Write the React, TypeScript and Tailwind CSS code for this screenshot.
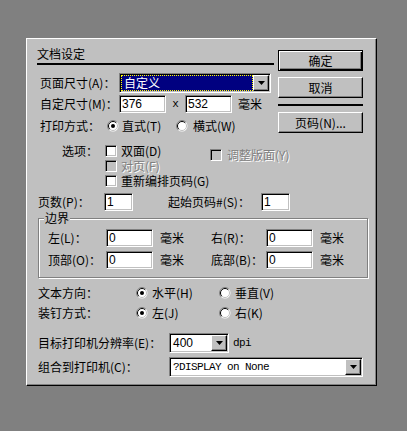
import type { ReactNode } from "react";

const sunken =
  "border border-t-[#808080] border-l-[#808080] border-r-white border-b-white shadow-[inset_1px_1px_0_#000,inset_-1px_-1px_0_#c0c0c0]";

function Field({ className, value }: { className: string; value: string }) {
  return (
    <div
      className={`${className} h-[18px] shrink-0 bg-white pl-[2px] flex items-center font-['Liberation_Sans',sans-serif] ${sunken}`}
    >
      {value}
    </div>
  );
}

function Arrow() {
  return (
    <svg width="7" height="4" viewBox="0 0 7 4">
      <polygon points="0,0 7,0 3.5,4" fill="#000" />
    </svg>
  );
}

function Combo({
  className,
  children,
  selected = false,
}: {
  className: string;
  children: ReactNode;
  selected?: boolean;
}) {
  return (
    <div className={`${className} h-[20px] shrink-0 flex bg-white p-[1px] ${sunken}`}>
      <div
        className={
          selected
            ? "flex-1 flex items-center pl-[2px] bg-[#000080] text-white border border-dotted border-[#ffff00]"
            : "flex-1 flex items-center pl-[2px]"
        }
      >
        {children}
      </div>
      <div className="w-[16px] h-full bg-[#c0c0c0] border border-t-white border-l-white border-r-black border-b-black shadow-[inset_-1px_-1px_0_#808080] flex items-center justify-center">
        <Arrow />
      </div>
    </div>
  );
}

function Checkbox({ disabled = false }: { disabled?: boolean }) {
  return (
    <div
      className={`w-[12px] h-[12px] shrink-0 ${disabled ? "bg-[#c0c0c0]" : "bg-white"} ${sunken}`}
    />
  );
}

function Radio({ checked = false }: { checked?: boolean }) {
  return (
    <svg width="12" height="12" viewBox="0 0 12 12" className="shrink-0">
      <circle cx="6" cy="6" r="5.5" fill="#fff" />
      <path d="M2.1 9.9 A5.5 5.5 0 0 1 9.9 2.1" fill="none" stroke="#808080" />
      <path d="M2.8 9.2 A4.5 4.5 0 0 1 9.2 2.8" fill="none" stroke="#000" />
      <path d="M9.2 2.8 A4.5 4.5 0 0 1 2.8 9.2" fill="none" stroke="#c0c0c0" />
      {checked && <circle cx="6" cy="6" r="2" fill="#000" />}
    </svg>
  );
}

function Btn({ children, def = false }: { children: ReactNode; def?: boolean }) {
  return (
    <button
      className={
        def
          ? "w-full h-[21px] bg-[#c0c0c0] border border-black shadow-[inset_1px_1px_0_#fff,inset_-1px_-1px_0_#000,inset_-2px_-2px_0_#808080] flex items-center justify-center"
          : "w-full h-[21px] bg-[#c0c0c0] border border-t-white border-l-white border-r-black border-b-black shadow-[inset_-1px_-1px_0_#808080] flex items-center justify-center"
      }
    >
      {children}
    </button>
  );
}

const disabledText = "text-[#808080] [text-shadow:1px_1px_0_#fff]";

export default function App() {
  return (
    <div className="min-h-[431px] w-full bg-[#808080] pt-[38px] pl-[26px] font-['Noto_Sans_CJK_SC',sans-serif] text-[12px] leading-[14px] text-black">
      <div className="w-[351px] h-[348px] bg-[#c0c0c0] border border-t-white border-l-white border-r-black border-b-black shadow-[inset_-1px_-1px_0_#808080] pl-[10px]">
        {/* title + size + buttons */}
        <div className="flex">
          <div className="w-[237px]">
            <div className="h-[26px] border-b-2 border-black flex items-end pb-[2px]">文档设定</div>
            <div className="mt-[8px] h-[20px] flex items-center">
              <span className="pl-[3px] w-[82px] whitespace-nowrap">页面尺寸(A)：</span>
              <Combo className="w-[152px]" selected>
                自定义
              </Combo>
            </div>
            <div className="mt-[2px] h-[18px] flex items-center">
              <span className="pl-[3px] w-[82px] whitespace-nowrap">自定尺寸(M)：</span>
              <Field className="w-[47px]" value="376" />
              <span className="w-[19px] text-center font-['Liberation_Mono',monospace] text-[11px]">x</span>
              <Field className="w-[47px]" value="532" />
              <span className="ml-[6px]">毫米</span>
            </div>
            <div className="mt-[4px] h-[18px] flex items-center">
              <span className="pl-[3px] w-[70px] whitespace-nowrap">打印方式：</span>
              <Radio checked />
              <span className="ml-[3px] w-[54px]">直式(T)</span>
              <Radio />
              <span className="ml-[5px]">横式(W)</span>
            </div>
          </div>
          <div className="ml-[4px] w-[85px]">
            <div className="mt-[11px]">
              <Btn def>确定</Btn>
            </div>
            <div className="mt-[6px]">
              <Btn>取消</Btn>
            </div>
            <div className="mt-[6px] h-[2px] bg-black" />
            <div className="mt-[6px]">
              <Btn>页码(N)...</Btn>
            </div>
          </div>
        </div>

        {/* options */}
        <div className="mt-[8px] flex">
          <div className="ml-[25px] w-[43px] h-[15px] flex items-center">选项：</div>
          <div className="w-[105px]">
            <div className="h-[15px] flex items-center">
              <Checkbox />
              <span className="ml-[4px]">双面(D)</span>
            </div>
            <div className="h-[15px] flex items-center">
              <Checkbox disabled />
              <span className={`ml-[4px] ${disabledText}`}>对页(F)</span>
            </div>
            <div className="h-[15px] flex items-center whitespace-nowrap">
              <Checkbox />
              <span className="ml-[4px]">重新编排页码(G)</span>
            </div>
          </div>
          <div className="mt-[5px] h-[14px] flex items-center">
            <Checkbox disabled />
            <span className={`ml-[5px] ${disabledText}`}>调整版面(Y)</span>
          </div>
        </div>

        {/* page count */}
        <div className="mt-[5px] h-[18px] flex items-center">
          <span className="ml-[1px] w-[66px] whitespace-nowrap">页数(P)：</span>
          <Field className="w-[29px]" value="1" />
          <span className="ml-[35px] w-[93px] whitespace-nowrap">起始页码#(S)：</span>
          <Field className="w-[29px]" value="1" />
        </div>

        {/* margins group */}
        <div className="relative mt-[7px] ml-[1px] w-[330px] h-[60px] border border-[#808080] shadow-[inset_1px_1px_0_#fff,1px_1px_0_#fff] pt-[10px] pl-[9px]">
          <span className="absolute -top-[8px] left-[5px] px-[1px] bg-[#c0c0c0]">边界</span>
          <div className="h-[18px] flex items-center">
            <span className="w-[58px] whitespace-nowrap">左(L)：</span>
            <Field className="w-[47px]" value="0" />
            <span className="ml-[7px] w-[51px]">毫米</span>
            <span className="w-[55px] whitespace-nowrap">右(R)：</span>
            <Field className="w-[47px]" value="0" />
            <span className="ml-[7px]">毫米</span>
          </div>
          <div className="mt-[4px] h-[18px] flex items-center">
            <span className="w-[58px] whitespace-nowrap">顶部(O)：</span>
            <Field className="w-[47px]" value="0" />
            <span className="ml-[7px] w-[51px]">毫米</span>
            <span className="w-[55px] whitespace-nowrap">底部(B)：</span>
            <Field className="w-[47px]" value="0" />
            <span className="ml-[7px]">毫米</span>
          </div>
        </div>

        {/* direction + binding */}
        <div className="mt-[6px] h-[18px] flex items-center">
          <span className="ml-[1px] w-[98px]">文本方向：</span>
          <Radio checked />
          <span className="ml-[4px] w-[67px]">水平(H)</span>
          <Radio />
          <span className="ml-[4px]">垂直(V)</span>
        </div>
        <div className="mt-[2px] h-[18px] flex items-center">
          <span className="ml-[1px] w-[98px]">装钉方式：</span>
          <Radio checked />
          <span className="ml-[4px] w-[67px]">左(J)</span>
          <Radio />
          <span className="ml-[4px]">右(K)</span>
        </div>

        {/* printer */}
        <div className="mt-[11px] h-[20px] flex items-center">
          <span className="ml-[1px] w-[131px] whitespace-nowrap">目标打印机分辨率(E)：</span>
          <Combo className="w-[60px]">
            <span className="font-['Liberation_Sans',sans-serif]">400</span>
          </Combo>
          <span className="ml-[4px] font-['Liberation_Mono',monospace] text-[11px] tracking-[-0.6px]">dpi</span>
        </div>
        <div className="mt-[4px] h-[20px] flex items-center">
          <span className="ml-[1px] w-[131px] whitespace-nowrap">组合到打印机(C)：</span>
          <Combo className="w-[194px]">
            <span className="font-['Liberation_Mono',monospace] text-[11px] tracking-[-0.6px] whitespace-pre">?DISPLAY on None</span>
          </Combo>
        </div>
      </div>
    </div>
  );
}
